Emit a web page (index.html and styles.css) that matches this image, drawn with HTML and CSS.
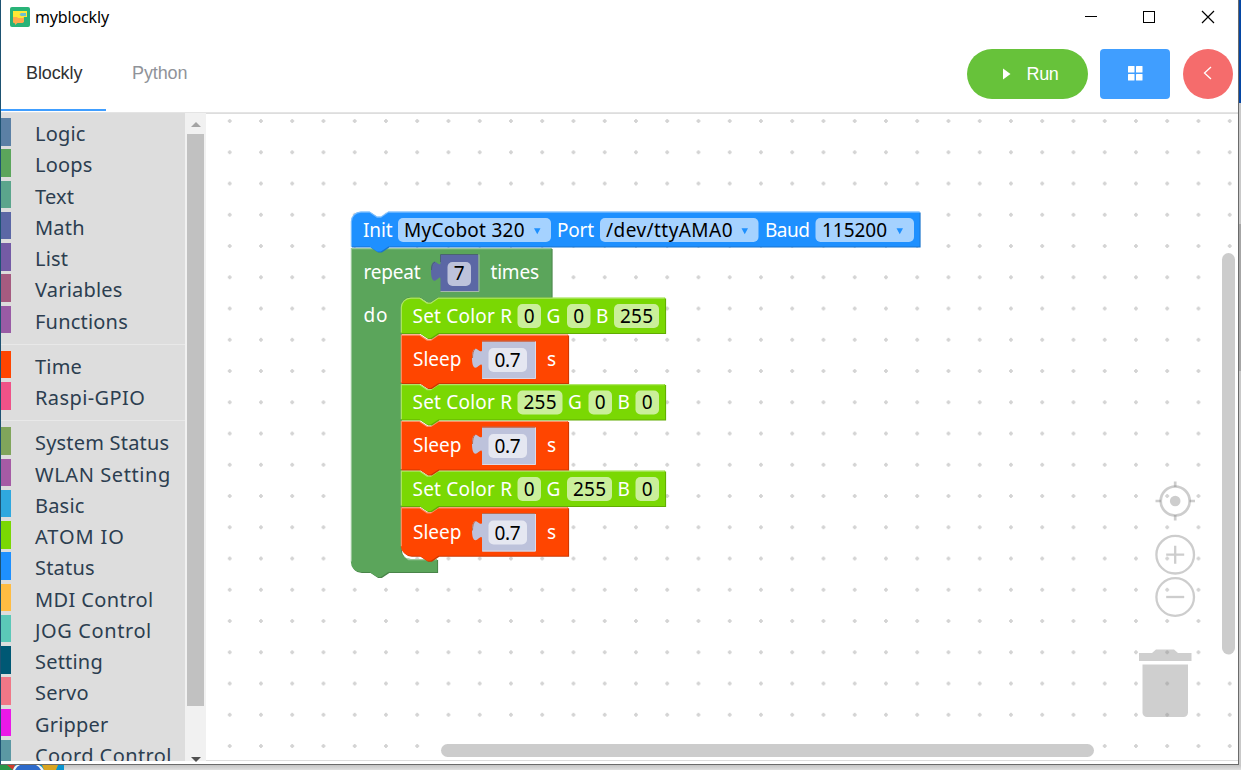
FILE: index.html
```html
<!DOCTYPE html>
<html lang="en">
<head>
<meta charset="utf-8">
<title>myblockly</title>
<link rel="stylesheet" href="styles.css">
</head>
<body>
<div class="desktop">
<div class="window">
  <header class="titlebar">
    <svg class="logo" width="20" height="20" viewBox="0 0 20 20"><rect width="20" height="20" rx="2" fill="#29b378"/><path d="M3 10h11v5l-1.500 1h-5l-2.500 2v-1.500l-2-1z" fill="#ffa94d"/><path d="M3 4h14v6h-3l-1 1h-5l-1-1h-4z" fill="#ffe835"/><path d="M9.500 7.500l1.500-1.500h5v3h-5z" fill="#6fc0ce"/></svg>
    <span class="app-name">myblockly</span>
    <svg class="win-controls" width="124" height="14" viewBox="0 0 124 14" fill="none" stroke="#000"><path d="M0 6.500h12"/><rect x="58.500" y="1.500" width="11" height="11"/><path d="M117 1l12 12M129 1l-12 12" stroke-width="1.200"/></svg>
  </header>
  <nav class="toolbar">
    <div class="tab active">Blockly</div>
    <div class="tab">Python</div>
    <div class="actions">
      <button class="btn run"><svg width="8" height="12" viewBox="0 0 8 12"><path d="M0 .5v11L7.500 6z" fill="#fff"/></svg><span>Run</span></button>
      <button class="btn grid"><svg width="15" height="15" viewBox="0 0 15 15" fill="#fff"><rect width="6.500" height="6.500" rx=".5"/><rect x="8" width="6.500" height="6.500" rx=".5"/><rect y="8" width="6.500" height="6.500" rx=".5"/><rect x="8" y="8" width="6.500" height="6.500" rx=".5"/></svg></button>
      <button class="btn back"><svg width="10" height="14" viewBox="0 0 10 14"><path d="M8 1L1.500 7 8 13" fill="none" stroke="#fff" stroke-width="1.300"/></svg></button>
    </div>
  </nav>
  <main class="content">
    <aside class="toolbox">
      <div class="cat c-logic">Logic</div>
      <div class="cat c-loops">Loops</div>
      <div class="cat c-text">Text</div>
      <div class="cat c-math">Math</div>
      <div class="cat c-list">List</div>
      <div class="cat c-vars">Variables</div>
      <div class="cat c-func">Functions</div>
      <div class="sep"></div>
      <div class="cat c-time">Time</div>
      <div class="cat c-gpio">Raspi-GPIO</div>
      <div class="sep"></div>
      <div class="cat c-system">System Status</div>
      <div class="cat c-wlan">WLAN Setting</div>
      <div class="cat c-basic">Basic</div>
      <div class="cat c-atom">ATOM IO</div>
      <div class="cat c-status">Status</div>
      <div class="cat c-mdi">MDI Control</div>
      <div class="cat c-jog">JOG Control</div>
      <div class="cat c-setting">Setting</div>
      <div class="cat c-servo">Servo</div>
      <div class="cat c-gripper">Gripper</div>
      <div class="cat c-coord">Coord Control</div>
    </aside>
    <div class="scrollbar">
      <svg width="10" height="5" viewBox="0 0 10 5"><path d="M0 5L5 0l5 5z" fill="#a3a3a3"/></svg>
      <div class="thumb"></div>
      <svg class="down" width="10" height="5" viewBox="0 0 10 5"><path d="M0 0h10L5 5z" fill="#505050"/></svg>
    </div>
    <svg class="workspace" width="1032" height="648" viewBox="206 113 1032 648">
      <defs>
        <pattern id="dots" x="214.100" y="105.400" width="31.250" height="31.250" patternUnits="userSpaceOnUse"><path d="M13.700 15.600h3.800M15.600 13.700v3.800" stroke="#d4d4d4" stroke-width="1.900"/></pattern>
        <path id="init" d="M351.250 222a10 10 0 0 1 10-10H370l7.500 5h3.750l7.500-5H920v35H388.750l-7.500 5H377.500l-7.500-5H351.250z"/>
        <path id="repeat" d="M351.250 248.500H552V297.500H438.750l-7.500 5h-3.750l-7.500-5H411.250a10 10 0 0 0-10 10V549.500a10 10 0 0 0 10 10H437.500V572.500H388.750l-7.500 5h-3.750l-7.500-5H361.250a10 10 0 0 1-10-10z"/>
        <path id="first" d="M401.250 308a10 10 0 0 1 10-10H420l7.500 5h3.750l7.500-5H665.500v35.500H438.750l-7.500 5h-3.750l-7.500-5H401.250z"/>
        <path id="color" d="M401.250 298H420l7.500 5h3.750l7.500-5H665.500v35.500H438.750l-7.500 5h-3.750l-7.500-5H401.250z"/>
        <path id="sleep" d="M401.250 335H420l7.500 5h3.750l7.500-5H568.500v48.500H438.750l-7.500 5h-3.750l-7.500-5H401.250z"/>
        <path id="last" d="M401.250 335H420l7.500 5h3.750l7.500-5H568.500v48.500H438.750l-7.500 5h-3.750l-7.500-5H411.250a10 10 0 0 1-10-10z"/>
        <path id="value" d="M482 341.500h53.500v37.500H482v-12.500c0-4-2.500-1-5 .7c-3.500 2-5-3-5-9s1.500-11 5-9c2.500 1.700 5 3.500 5 .7z"/>
        <g id="pause">
          <use href="#value" class="p"/><path d="M482.500 378.500h53v-37" fill="none" stroke="#ded9e4"/><path d="M482 341h53M475 349q-2.500 2-2.500 9" fill="none" stroke="#b8694f"/>
          <rect class="field pale" x="488.500" y="348" width="38.500" height="24" rx="5"/>
          <text class="dark" x="494.500" y="367" textLength="26">0.7</text>
          <text x="413" y="366" textLength="48.500">Sleep</text><text x="547" y="366">s</text>
        </g>
      </defs>
      <rect x="206" y="113" width="1032" height="648" fill="url(#dots)"/>

      <g class="trash" fill="#888" fill-opacity=".4"><path d="M1139 653h13l4-3.500h18l4 3.500h13.500v8H1139z"/><path d="M1142.500 664.500h45.500v48a4.500 4.500 0 0 1-4.500 4.500h-36.500a4.500 4.500 0 0 1-4.500-4.500z"/></g>
      <g class="zoom" fill="none" stroke="#888" stroke-opacity=".42" stroke-width="2.300">
        <circle cx="1175.200" cy="501" r="14.500" stroke-width="2.700"/><path d="M1175.200 481.500v5.500M1175.200 515v5.500M1155.500 501h5.500M1189.500 501h5.500" stroke-width="2.700"/><circle cx="1175.200" cy="501" r="5.300" fill="#888" fill-opacity=".42" stroke="none"/>
        <circle cx="1175.200" cy="554.700" r="18.800"/><path d="M1166.200 554.700h18M1175.200 545.700v18"/>
        <circle cx="1175.200" cy="597" r="18.800"/><path d="M1166.200 597h18"/>
      </g>

      <g transform="translate(-.4 -.4)">
      <use href="#repeat" transform="translate(1 1)" fill="#498449"/><use href="#repeat" fill="#5ba55b"/>
      <path class="light" d="M351.750 562V249h199.500M405 557l4 3h28"/>
      <use href="#init" transform="translate(1 1)" fill="#1873cc"/><use href="#init" fill="#1e90ff"/>
      <path class="light" d="M351.750 246.500V222a9.500 9.500 0 0 1 9.500-9.500H370l7.500 5h3.750l7.500-5H920"/>

      <g transform="translate(0 172.700)"><use href="#last" transform="translate(1 1)" fill="#cc3700"/><use href="#last" fill="#ff4500"/><path class="light" d="M401.700 374V335.500H420l7.500 5h3.750l7.500-5H568"/></g>
      <g transform="translate(0 173)"><use href="#color" transform="translate(1 1)" fill="#61ac02"/><use href="#color" fill="#7ad803"/><path class="light" d="M401.700 333V298.500H420l7.500 5h3.750l7.500-5H665"/></g>
      <g transform="translate(0 86.300)"><use href="#sleep" transform="translate(1 1)" fill="#cc3700"/><use href="#sleep" fill="#ff4500"/><path class="light" d="M401.700 383V335.500H420l7.500 5h3.750l7.500-5H568"/></g>
      <g transform="translate(0 86.500)"><use href="#color" transform="translate(1 1)" fill="#61ac02"/><use href="#color" fill="#7ad803"/><path class="light" d="M401.700 333V298.500H420l7.500 5h3.750l7.500-5H665"/></g>
      <g><use href="#sleep" transform="translate(1 1)" fill="#cc3700"/><use href="#sleep" fill="#ff4500"/><path class="light" d="M401.700 383V335.500H420l7.500 5h3.750l7.500-5H568"/></g>
      <use href="#first" transform="translate(1 1)" fill="#61ac02"/><use href="#first" fill="#7ad803"/><path class="light" d="M401.700 333V308a9.500 9.500 0 0 1 9.500-9.500H420l7.500 5h3.750l7.500-5H665"/>
      </g>

      <g class="label">
        <rect class="field" x="398" y="218" width="153" height="24" rx="5"/><rect class="field" x="600" y="218" width="158.500" height="24" rx="5"/><rect class="field" x="815.500" y="218" width="98.500" height="24" rx="5"/>
        <path d="M534 228.200h6.500l-3.250 6zM741.500 228.200h6.500l-3.250 6zM896.500 228.200h6.500l-3.250 6z" fill="#1e90ff"/>
        <text x="363" y="237" textLength="29.500">Init</text><text class="dark" x="404" y="237" textLength="120.500">MyCobot 320</text><text x="557" y="237" textLength="37">Port</text><text class="dark" x="606" y="237" textLength="126.500">/dev/ttyAMA0</text><text x="765" y="237" textLength="45">Baud</text><text class="dark" x="822" y="237" textLength="65">115200</text>
        <text x="363.500" y="279" textLength="57">repeat</text><text x="490.500" y="279" textLength="48.500">times</text><text x="363.500" y="322" textLength="24">do</text>
        <path d="M440.500 255h38v37h-38v-12.500c0-4-2-1-4.500.7c-3.500 2-5-3-5-9s1.500-11 5-9c2.500 1.700 4.500 3.500 4.500.7z" fill="#5b67a5"/><path d="M440.500 291.500h38.500v-37" fill="none" stroke="#a5b8ad"/><path d="M440.500 262v-7.500h37.500M435 262q-3.500 1-3.500 8" fill="none" stroke="#49646f"/>
        <rect class="field" x="447.500" y="262" width="23.500" height="24" rx="5"/><text class="dark" x="453.700" y="280">7</text>

        <text x="412.500" y="323" textLength="99.500">Set Color R</text><rect class="field" x="517.500" y="304" width="23.500" height="24" rx="5"/><text class="dark" x="523.700" y="323">0</text><text x="546.500" y="323">G</text><rect class="field" x="567" y="304" width="23.500" height="24" rx="5"/><text class="dark" x="573.200" y="323">0</text><text x="596" y="323">B</text><rect class="field" x="614" y="304" width="45" height="24" rx="5"/><text class="dark" x="620" y="323" textLength="33">255</text>
        <text x="412.500" y="409" textLength="99.500">Set Color R</text><rect class="field" x="517.500" y="390.500" width="45" height="24" rx="5"/><text class="dark" x="523.500" y="409" textLength="33">255</text><text x="568" y="409">G</text><rect class="field" x="588.500" y="390.500" width="23.500" height="24" rx="5"/><text class="dark" x="594.700" y="409">0</text><text x="617.500" y="409">B</text><rect class="field" x="635.500" y="390.500" width="23.500" height="24" rx="5"/><text class="dark" x="641.700" y="409">0</text>
        <text x="412.500" y="496" textLength="99.500">Set Color R</text><rect class="field" x="517.500" y="477" width="23.500" height="24" rx="5"/><text class="dark" x="523.700" y="496">0</text><text x="546.500" y="496">G</text><rect class="field" x="567" y="477" width="45" height="24" rx="5"/><text class="dark" x="573" y="496" textLength="33">255</text><text x="617.500" y="496">B</text><rect class="field" x="635.500" y="477" width="23.500" height="24" rx="5"/><text class="dark" x="641.700" y="496">0</text>
        <use href="#pause"/><use href="#pause" y="86"/><use href="#pause" y="172.500"/>
      </g>
      <rect x="1222" y="253" width="13" height="401.500" rx="6.500" fill="#ccc"/>
      <rect x="441" y="744" width="653" height="13" rx="6.500" fill="#ccc"/>
      <path d="M206 113.500h1032M206 760.500h1032" stroke="#ddd"/>
    </svg>
  </main>
</div>
<div class="right-edge"></div>
<svg class="taskbar" width="1241" height="5" viewBox="0 0 1241 5"><rect width="64" height="5" fill="#0894cf"/><path d="M0 0h9l4 5H0z" fill="#2b9648"/><path d="M7 0h8l-2 5z" fill="#d23b2d"/><path d="M13 5q1-4 4-5h22q4 2 5 5z" fill="#f5f5f5"/><path d="M15 5q2-4 5-5h16q4 2 5 5z" fill="#2f6bcb"/><path d="M42 0h16l-2 5H44z" fill="#d9a520"/></svg>
</div>
</body>
</html>
```
FILE: styles.css
```css
* { box-sizing: border-box; }
body { margin: 0; overflow: hidden; }
.desktop {
  width: 1241px; height: 770px;
  display: grid; grid-template-columns: 1239px 2px; grid-template-rows: 765px 5px;
  background: linear-gradient(#bdbdbd 765px, #c4c4c4 765px, #e0e0e0 770px);
}
.window {
  display: flex; flex-direction: column; background: #fff;
  border: solid #6b6b6b; border-width: 0 1px 1px 1px; border-left-color: #1d5272;
}
.right-edge { background: linear-gradient(#0546a3 103px, #c9c9c9 103px, #c9c9c9 224px, #a6a6a6 224px, #a6a6a6 371px, #c9c9c9 371px); }
.taskbar { grid-column: 1 / 3; }

.titlebar { height: 34px; display: flex; align-items: center; padding: 0 24px 0 9px; }
.app-name { margin-left: 5px; font: 16px "Noto Sans", sans-serif; letter-spacing: -.15px; color: #000; }
.win-controls { margin-left: auto; overflow: visible; margin-right: 5px; }

.toolbar { height: 79px; padding-top: 1px; display: flex; border-bottom: 1px solid #e4e4e4; font-family: "Liberation Sans", sans-serif; }
.tab { height: 76px; width: 105px; padding-left: 25px; line-height: 76px; font-size: 18px; letter-spacing: -.1px; color: #909399; }
.tab + .tab { padding-left: 26px; }
.tab.active { color: #303133; border-bottom: 2px solid #409eff; }
.actions { margin-left: auto; display: flex; gap: 12px; padding: 14px 5px 0 0; }
.btn { border: 0; padding: 0; height: 50px; color: #fff; display: flex; align-items: center; justify-content: center; font: 18px "Liberation Sans", sans-serif; }
.run { width: 121px; border-radius: 25px; background: #67c23a; gap: 15px; padding-left: 7px; letter-spacing: -.3px; }
.grid { width: 70px; border-radius: 4px; background: #409eff; padding-left: 1px; }
.grid svg { margin-top: -2px; }
.back { width: 50px; border-radius: 50%; background: #f56c6c; margin-left: 1px; }
.back svg { margin: -2px 1px 0 0; }

.content { display: flex; height: 648px; }
.toolbox { width: 184px; background: #ddd; padding-top: 5px; overflow: hidden; }
.cat {
  height: 27.5px; margin-bottom: 3.75px; padding-left: 24px;
  border-left: 10px solid; line-height: 31px; white-space: nowrap;
  font-family: "Noto Sans", sans-serif; font-size: 20px; letter-spacing: .2px; color: #2c3e50;
}
.sep { height: 1px; margin: 10.75px 0 6px; background: #e8e8e8; }
.c-logic { border-color: #5b80a5; }
.c-loops { border-color: #5ba55b; }
.c-text { border-color: #5ba58c; }
.c-math { border-color: #5b67a5; }
.c-list { border-color: #745ba5; }
.c-vars { border-color: #a55b80; }
.c-func { border-color: #995ba5; }
.c-time { border-color: #ff4500; }
.c-gpio { border-color: #f05288; letter-spacing: .4px; }
.c-system { border-color: #80a55b; }
.c-wlan { border-color: #a55ba5; letter-spacing: .6px; }
.c-basic { border-color: #2fa8df; }
.c-atom { border-color: #7ad803; letter-spacing: .9px; }
.c-status { border-color: #1e90ff; }
.c-mdi { border-color: #ffbc42; letter-spacing: .4px; }
.c-jog { border-color: #5bc8b8; letter-spacing: .6px; }
.c-setting { border-color: #005874; }
.c-servo { border-color: #f07787; }
.c-gripper { border-color: #eb18e8; }
.c-coord { border-color: #5b98a3; letter-spacing: .4px; }

.scrollbar { width: 21px; background: #f1f1f1; display: flex; flex-direction: column; align-items: center; padding-top: 9px; }
.thumb { width: 17px; height: 572px; margin-top: 7px; background: #c1c1c1; }
.down { margin-top: auto; margin-bottom: -1px; }

.workspace { display: block; font-family: "Noto Sans", sans-serif; font-size: 19px; fill: #fff; }
.light { fill: none; stroke: #fff; stroke-opacity: .4; stroke-width: 1.200; }
.field { fill: #fff; fill-opacity: .6; }
.dark { fill: #000; }
.p { fill: #bdc2db; }
```
